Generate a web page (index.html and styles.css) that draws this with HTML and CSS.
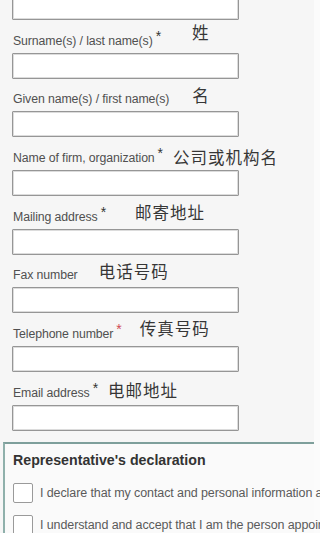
FILE: index.html
```html
<!DOCTYPE html>
<html lang="en">
<head>
<meta charset="utf-8">
<title>Representative form</title>
<link rel="stylesheet" href="styles.css">
</head>
<body>
<div class="page">
  <form class="form">
    <div class="field first"><input class="box" type="text"></div>

    <div class="field">
      <div class="label-row">
        <span class="label">Surname(s) / last name(s)</span><span class="req">*</span>
        <span class="note note-surname">姓</span>
      </div>
      <input class="box" type="text">
    </div>

    <div class="field">
      <div class="label-row">
        <span class="label">Given name(s) / first name(s)</span>
        <span class="note note-given">名</span>
      </div>
      <input class="box" type="text">
    </div>

    <div class="field">
      <div class="label-row">
        <span class="label">Name of firm, organization</span><span class="req">*</span>
        <span class="note note-firm">公司或机构名</span>
      </div>
      <input class="box" type="text">
    </div>

    <div class="field">
      <div class="label-row">
        <span class="label">Mailing address</span><span class="req">*</span>
        <span class="note note-mail">邮寄地址</span>
      </div>
      <input class="box" type="text">
    </div>

    <div class="field">
      <div class="label-row">
        <span class="label">Fax number</span>
        <span class="note note-fax">电话号码</span>
      </div>
      <input class="box" type="text">
    </div>

    <div class="field">
      <div class="label-row">
        <span class="label">Telephone number</span><span class="req red">*</span>
        <span class="note note-tel">传真号码</span>
      </div>
      <input class="box" type="text">
    </div>

    <div class="field">
      <div class="label-row">
        <span class="label">Email address</span><span class="req">*</span>
        <span class="note note-email">电邮地址</span>
      </div>
      <input class="box" type="text">
    </div>
  </form>

  <section class="declaration">
    <h2 class="decl-title">Representative's declaration</h2>
    <label class="check-row">
      <span class="check"></span>
      <span class="check-text">I declare that my contact and personal information above is correct.</span>
    </label>
    <label class="check-row">
      <span class="check"></span>
      <span class="check-text">I understand and accept that I am the person appointed to represent the applicant.</span>
    </label>
  </section>
</div>
</body>
</html>
```

FILE: styles.css
```css
html, body {
  margin: 0;
  padding: 0;
  background: #fafafa;
  overflow: hidden;
}

.page {
  width: 320px;
  height: 533px;
  background: linear-gradient(to right, #f6f6f6 314px, #fbfbfb 314px);
  font-family: "Liberation Sans", Arial, sans-serif;
  overflow: hidden;
}

.form {
  margin: -6px 0 0 0;
  padding: 0 0 0 12px;
  display: flex;
  flex-direction: column;
}

.field {
  display: flex;
  flex-direction: column;
}

.label-row {
  height: 32.67px;
  display: flex;
  align-items: flex-end;
  white-space: nowrap;
}

.label {
  font-size: 12.3px;
  color: #505050;
  letter-spacing: -0.1px;
  line-height: 14px;
  padding: 0 0 5px 1px;
}

.req {
  font-size: 14px;
  color: #333;
  line-height: 14px;
  padding: 0 0 10px 3px;
}

.req.red {
  color: #d04a55;
}

.note {
  font-family: "Noto Sans CJK SC", "Noto Sans", sans-serif;
  font-size: 16.5px;
  color: #363636;
  line-height: 20px;
  letter-spacing: 1px;
}

.note-surname { margin-left: 31px; padding-bottom: 11px; }
.note-given   { margin-left: 23px; padding-bottom: 6px; }
.note-firm    { margin-left: 10px; padding-bottom: 3px; }
.note-mail    { margin-left: 29px; padding-bottom: 7px; }
.note-fax     { margin-left: 21px; padding-bottom: 6px; }
.note-tel     { margin-left: 18px; padding-bottom: 8px; }
.note-email   { margin-left: 10px; padding-bottom: 5px; }

.box {
  display: block;
  box-sizing: border-box;
  width: 227px;
  height: 26px;
  margin: 0;
  padding: 0 4px;
  background: #fff;
  border: 1px solid #969696;
  box-shadow: inset 0 0 0 1px #dcdcdc;
  border-radius: 1px;
  outline: none;
}

.declaration {
  width: 311px;
  margin: 11px 0 0 3px;
  border-top: 2px solid #7e9f9b;
  border-left: 2px solid #8fb0ab;
  background: #fafafa;
  padding: 8px 0 0 8px;
  white-space: nowrap;
  height: 120px;
  box-sizing: border-box;
}

.decl-title {
  margin: 0;
  font-size: 14.2px;
  font-weight: bold;
  color: #333;
  line-height: 17px;
}

.check-row {
  display: flex;
  align-items: center;
  gap: 7px;
}

.decl-title + .check-row {
  margin-top: 14px;
}

.check-row + .check-row {
  margin-top: 12px;
}

.check {
  flex: none;
  width: 20px;
  height: 20px;
  box-sizing: border-box;
  background: #fff;
  border: 1px solid #9a9a9a;
  border-radius: 2px;
}

.check-text {
  font-size: 12.5px;
  color: #5a5a5a;
  letter-spacing: -0.1px;
}
```
